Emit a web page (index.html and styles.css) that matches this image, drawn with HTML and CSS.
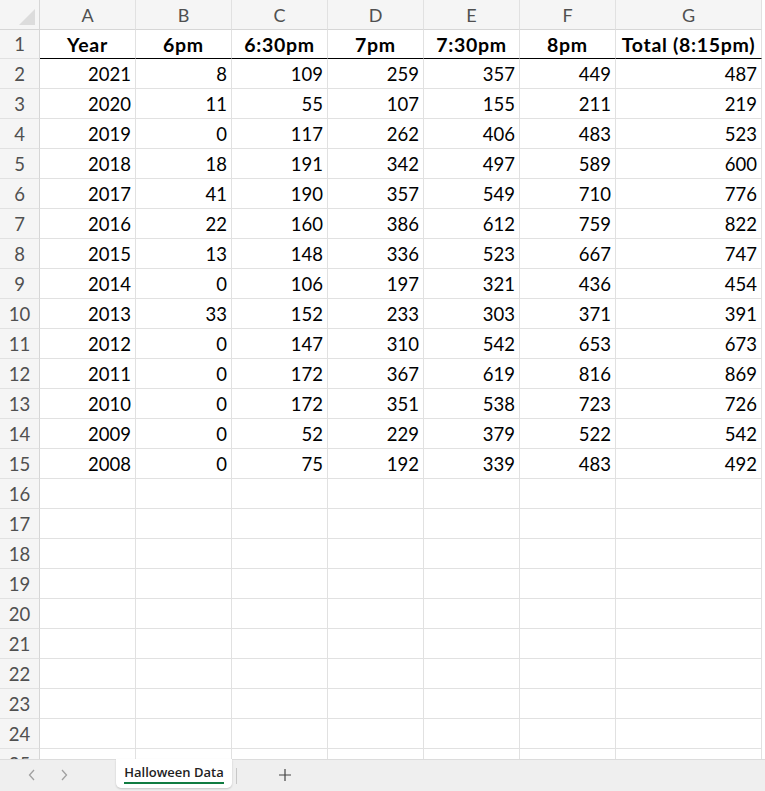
FILE: index.html
```html
<!DOCTYPE html>
<html>
<head>
<meta charset="utf-8">
<link rel="stylesheet" href="styles.css">
</head>
<body>
<div class="app">
  <div class="sheet">
    <div class="grid">
      <div class="corner"><span class="tri"></span></div>
      <div class="ch">A</div><div class="ch">B</div><div class="ch">C</div><div class="ch">D</div><div class="ch">E</div><div class="ch">F</div><div class="ch">G</div>

      <div class="rh r1">1</div>
      <div class="c hd">Year</div><div class="c hd">6pm</div><div class="c hd">6:30pm</div><div class="c hd">7pm</div><div class="c hd">7:30pm</div><div class="c hd">8pm</div><div class="c hd">Total (8:15pm)</div>

      <div class="rh">2</div><div class="c">2021</div><div class="c">8</div><div class="c">109</div><div class="c">259</div><div class="c">357</div><div class="c">449</div><div class="c">487</div>
      <div class="rh">3</div><div class="c">2020</div><div class="c">11</div><div class="c">55</div><div class="c">107</div><div class="c">155</div><div class="c">211</div><div class="c">219</div>
      <div class="rh">4</div><div class="c">2019</div><div class="c">0</div><div class="c">117</div><div class="c">262</div><div class="c">406</div><div class="c">483</div><div class="c">523</div>
      <div class="rh">5</div><div class="c">2018</div><div class="c">18</div><div class="c">191</div><div class="c">342</div><div class="c">497</div><div class="c">589</div><div class="c">600</div>
      <div class="rh">6</div><div class="c">2017</div><div class="c">41</div><div class="c">190</div><div class="c">357</div><div class="c">549</div><div class="c">710</div><div class="c">776</div>
      <div class="rh">7</div><div class="c">2016</div><div class="c">22</div><div class="c">160</div><div class="c">386</div><div class="c">612</div><div class="c">759</div><div class="c">822</div>
      <div class="rh">8</div><div class="c">2015</div><div class="c">13</div><div class="c">148</div><div class="c">336</div><div class="c">523</div><div class="c">667</div><div class="c">747</div>
      <div class="rh">9</div><div class="c">2014</div><div class="c">0</div><div class="c">106</div><div class="c">197</div><div class="c">321</div><div class="c">436</div><div class="c">454</div>
      <div class="rh">10</div><div class="c">2013</div><div class="c">33</div><div class="c">152</div><div class="c">233</div><div class="c">303</div><div class="c">371</div><div class="c">391</div>
      <div class="rh">11</div><div class="c">2012</div><div class="c">0</div><div class="c">147</div><div class="c">310</div><div class="c">542</div><div class="c">653</div><div class="c">673</div>
      <div class="rh">12</div><div class="c">2011</div><div class="c">0</div><div class="c">172</div><div class="c">367</div><div class="c">619</div><div class="c">816</div><div class="c">869</div>
      <div class="rh">13</div><div class="c">2010</div><div class="c">0</div><div class="c">172</div><div class="c">351</div><div class="c">538</div><div class="c">723</div><div class="c">726</div>
      <div class="rh">14</div><div class="c">2009</div><div class="c">0</div><div class="c">52</div><div class="c">229</div><div class="c">379</div><div class="c">522</div><div class="c">542</div>
      <div class="rh">15</div><div class="c">2008</div><div class="c">0</div><div class="c">75</div><div class="c">192</div><div class="c">339</div><div class="c">483</div><div class="c">492</div>
      <div class="rh">16</div><div class="c"></div><div class="c"></div><div class="c"></div><div class="c"></div><div class="c"></div><div class="c"></div><div class="c"></div>
      <div class="rh">17</div><div class="c"></div><div class="c"></div><div class="c"></div><div class="c"></div><div class="c"></div><div class="c"></div><div class="c"></div>
      <div class="rh">18</div><div class="c"></div><div class="c"></div><div class="c"></div><div class="c"></div><div class="c"></div><div class="c"></div><div class="c"></div>
      <div class="rh">19</div><div class="c"></div><div class="c"></div><div class="c"></div><div class="c"></div><div class="c"></div><div class="c"></div><div class="c"></div>
      <div class="rh">20</div><div class="c"></div><div class="c"></div><div class="c"></div><div class="c"></div><div class="c"></div><div class="c"></div><div class="c"></div>
      <div class="rh">21</div><div class="c"></div><div class="c"></div><div class="c"></div><div class="c"></div><div class="c"></div><div class="c"></div><div class="c"></div>
      <div class="rh">22</div><div class="c"></div><div class="c"></div><div class="c"></div><div class="c"></div><div class="c"></div><div class="c"></div><div class="c"></div>
      <div class="rh">23</div><div class="c"></div><div class="c"></div><div class="c"></div><div class="c"></div><div class="c"></div><div class="c"></div><div class="c"></div>
      <div class="rh">24</div><div class="c"></div><div class="c"></div><div class="c"></div><div class="c"></div><div class="c"></div><div class="c"></div><div class="c"></div>
      <div class="rh">25</div><div class="c"></div><div class="c"></div><div class="c"></div><div class="c"></div><div class="c"></div><div class="c"></div><div class="c"></div>
    </div>
  </div>
  <div class="tabbar">
    <div class="navs">
      <svg class="nav" width="10" height="14" viewBox="0 0 10 14"><path d="M7 2 L2.5 7 L7 12" fill="none" stroke="#a0a0a0" stroke-width="1.3"/></svg>
      <svg class="nav" width="10" height="14" viewBox="0 0 10 14"><path d="M3 2 L7.5 7 L3 12" fill="none" stroke="#a0a0a0" stroke-width="1.3"/></svg>
    </div>
    <div class="tab"><span class="tablabel">Halloween Data</span></div>
    <div class="sep"></div>
    <svg class="plus" width="14" height="14" viewBox="0 0 14 14"><path d="M7 1 V13 M1 7 H13" stroke="#444" stroke-width="1.2" fill="none"/></svg>
  </div>
</div>
</body>
</html>
```
FILE: styles.css
```css
html, body {
  margin: 0;
  padding: 0;
  background: #fff;
}
.app {
  width: 765px;
  height: 791px;
  display: flex;
  flex-direction: column;
  overflow: hidden;
  font-family: "Lato", "Open Sans", sans-serif;
}
.sheet {
  height: 759px;
  overflow: hidden;
  flex: none;
}
.grid {
  display: grid;
  grid-template-columns: 40px repeat(6, 96px) 146px;
  grid-template-rows: 30px 29px repeat(24, 30px);
}
.grid > div {
  box-sizing: border-box;
}
.corner {
  background: #f5f5f5;
  border-right: 1px solid #d6d6d6;
  border-bottom: 1px solid #d6d6d6;
  position: relative;
}
.tri {
  position: absolute;
  right: 4px;
  bottom: 4px;
  width: 0;
  height: 0;
  border-left: 16px solid transparent;
  border-bottom: 16px solid #dcdcdc;
}
.ch {
  background: #f5f5f5;
  border-right: 1px solid #e1e1e1;
  border-bottom: 1px solid #d6d6d6;
  color: #505050;
  font-size: 18px;
  display: flex;
  align-items: center;
  justify-content: center;
}
.rh {
  background: #f5f5f5;
  border-right: 1px solid #d6d6d6;
  border-bottom: 1px solid #e1e1e1;
  color: #505050;
  font-size: 18.5px;
  display: flex;
  align-items: center;
  justify-content: center;
}
.c {
  border-right: 1px solid #e1e1e1;
  border-bottom: 1px solid #e1e1e1;
  color: #000;
  font-size: 18.5px;
  display: flex;
  align-items: center;
  justify-content: flex-end;
  padding-right: 4px;
}
.hd {
  font-weight: 700;
  font-size: 19.5px;
  letter-spacing: 0.7px;
  justify-content: center;
  padding-right: 0;
  border-bottom: 1px solid #000;
}
.tabbar {
  flex: 1;
  background: #efefef;
  border-top: 1px solid #dcdcdc;
  display: flex;
  align-items: flex-start;
  position: relative;
}
.navs {
  display: flex;
  gap: 22px;
  padding-left: 27px;
  padding-top: 8px;
  width: 89px;
}
.tab {
  margin-top: -1px;
  width: 116px;
  height: 29px;
  background: #fff;
  border-radius: 0 0 5px 5px;
  box-shadow: 0 1px 2px rgba(0,0,0,0.18);
  display: flex;
  justify-content: center;
}
.tablabel {
  font-family: "Open Sans", sans-serif;
  font-size: 13px;
  font-weight: 600;
  color: #222;
  padding-top: 4px;
  height: 19px;
  border-bottom: 2px solid #107c41;
  line-height: 18px;
}
.sep {
  width: 1px;
  height: 16px;
  background: #c8c8c8;
  margin-left: 4px;
  margin-top: 8px;
}
.plus {
  margin-left: 41px;
  margin-top: 8px;
}
```
